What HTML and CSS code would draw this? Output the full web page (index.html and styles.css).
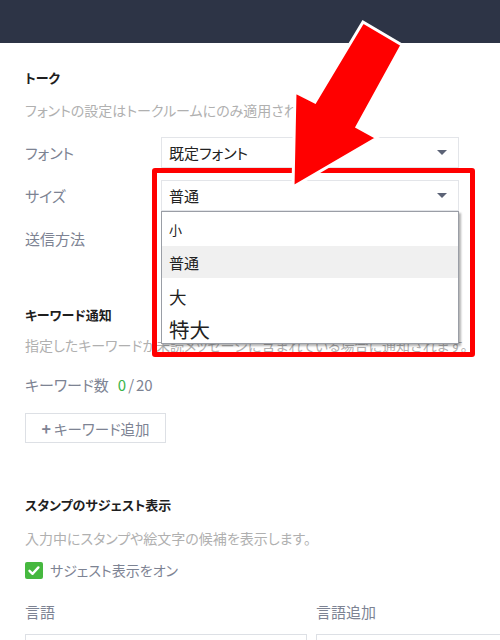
FILE: index.html
```html
<!DOCTYPE html>
<html lang="ja">
<head>
<meta charset="utf-8">
<title>設定</title>
<link rel="stylesheet" href="styles.css">
</head>
<body>
<header class="topbar"></header>
<main class="content">
  <section class="section talk">
    <h2 class="heading">トーク</h2>
    <p class="desc">フォントの設定はトークルームにのみ適用されます。</p>
    <div class="rows">
      <div class="row">
        <span class="label">フォント</span>
        <div class="select"><span>既定フォント</span><i class="caret"></i></div>
      </div>
      <div class="row">
        <span class="label">サイズ</span>
        <div class="select open"><span>普通</span><i class="caret"></i>
          <ul class="dropdown">
            <li class="opt s1">小</li>
            <li class="opt s2 active">普通</li>
            <li class="opt s3">大</li>
            <li class="opt s4">特大</li>
          </ul>
        </div>
      </div>
      <div class="row">
        <span class="label">送信方法</span>
        <div class="select"><span></span><i class="caret"></i></div>
      </div>
    </div>
  </section>

  <section class="section keyword">
    <h2 class="heading">キーワード通知</h2>
    <p class="desc">指定したキーワードが未読メッセージに含まれている場合に通知されます。</p>
    <p class="count">キーワード数<b class="num">0</b><span class="slash">/</span>20</p>
    <button class="addbtn"><span class="plus">+</span> キーワード追加</button>
  </section>

  <section class="section stamp">
    <h2 class="heading">スタンプのサジェスト表示</h2>
    <p class="desc">入力中にスタンプや絵文字の候補を表示します。</p>
    <label class="check">
      <span class="box"><svg viewBox="0 0 18 17" width="18" height="17"><path d="M4.5 8.8 L7.6 11.8 L13.4 5.4" fill="none" stroke="#fff" stroke-width="2.4" stroke-linecap="round" stroke-linejoin="round"/></svg></span>
      <span class="checktext">サジェスト表示をオン</span>
    </label>
    <div class="lang">
      <div class="langcol">
        <span class="label">言語</span>
        <div class="input"></div>
      </div>
      <div class="langcol">
        <span class="label">言語追加</span>
        <div class="input"></div>
      </div>
    </div>
  </section>
</main>

<div class="highlight"></div>
<svg class="arrow" width="500" height="640" viewBox="0 0 500 640">
  <polygon points="363,22 402,45 357,127 377,138 293,187 295,92 315,102" fill="#ff0000" stroke="#ffffff" stroke-width="3" stroke-linejoin="miter"/>
</svg>
</body>
</html>
```

FILE: styles.css
```css
* { box-sizing: border-box; }
html, body { margin: 0; padding: 0; }
body {
  width: 500px;
  height: 640px;
  overflow: hidden;
  background: #fff;
  font-family: "Noto Sans CJK JP", "Noto Sans", sans-serif;
  font-feature-settings: "palt";
  color: #1e1e1e;
  position: relative;
}
.topbar {
  height: 43px;
  background: #2d3446;
}
.content {
  padding: 25px 0 0 25px;
}
.heading {
  margin: 0;
  font-size: 13px;
  line-height: 20px;
  font-weight: bold;
  color: #1e1e1e;
}
.desc {
  margin: 12px 0 0;
  font-size: 14px;
  line-height: 20px;
  color: #b0b0b0;
  white-space: nowrap;
}
.rows {
  margin-top: 17px;
  display: flex;
  flex-direction: column;
  gap: 12px;
}
.row {
  display: flex;
  align-items: center;
  height: 31px;
}
.label {
  width: 136px;
  font-size: 15px;
  color: #7d8393;
}
.select {
  position: relative;
  width: 298px;
  height: 31px;
  border: 1px solid #e3e5e9;
  display: flex;
  align-items: center;
  padding: 0 7px;
  font-size: 15px;
  color: #222;
}
.select span { flex: 1; }
.caret {
  width: 0;
  height: 0;
  border-left: 5px solid transparent;
  border-right: 5px solid transparent;
  border-top: 5px solid #5c6376;
  margin-right: 4px;
}
.dropdown {
  position: absolute;
  left: -1px;
  top: 30px;
  width: 298px;
  margin: 0;
  padding: 0;
  list-style: none;
  background: #fff;
  border: 1px solid #9a9ea6;
  box-shadow: 2px 2px 2px rgba(0,0,0,0.3);
  z-index: 2;
}
.opt {
  display: flex;
  align-items: center;
  padding: 0 7px;
  color: #222;
}
.opt.active { background: #f0f0f0; }
.s1 { height: 34px; font-size: 13px; }
.s2 { height: 32px; font-size: 15px; }
.s3 { height: 36px; font-size: 17.5px; }
.s4 { height: 29px; font-size: 20.5px; }

.keyword { margin-top: 51px; }
.keyword .desc { margin-top: 10px; }
.count {
  margin: 20px 0 0;
  font-size: 15px;
  line-height: 20px;
  color: #7d8393;
}
.num { font-weight: normal; color: #3bb54a; margin-left: 9px; }
.slash { margin: 0 2px; }
.addbtn {
  margin-top: 18px;
  width: 141px;
  height: 30px;
  background: #fff;
  border: 1px solid #dde0e5;
  font-family: inherit;
  font-feature-settings: "palt";
  font-size: 14.5px;
  color: #7d8393;
  padding: 0;
}
.plus { font-weight: bold; font-size: 16px; }

.stamp { margin-top: 52px; }
.stamp .desc { margin-top: 13px; }
.check {
  margin-top: 12px;
  display: flex;
  align-items: center;
  height: 20px;
  gap: 7px;
}
.box {
  width: 18px;
  height: 17px;
  background: #46b83f;
  border-radius: 2px;
  display: flex;
}
.checktext {
  font-size: 14px;
  color: #7d8393;
}
.lang {
  margin-top: 22px;
  display: grid;
  grid-template-columns: 282px 200px;
  gap: 9px;
}
.langcol {
  display: flex;
  flex-direction: column;
  gap: 12px;
}
.langcol .label { line-height: 20px; width: auto; }
.input {
  height: 31px;
  border: 1px solid #dde0e5;
}

.highlight {
  position: absolute;
  left: 152px;
  top: 168px;
  width: 323px;
  height: 189px;
  border: 5px solid #ff0000;
  border-radius: 3px;
  z-index: 3;
}
.arrow {
  position: absolute;
  left: 0;
  top: 0;
  z-index: 4;
}
```
